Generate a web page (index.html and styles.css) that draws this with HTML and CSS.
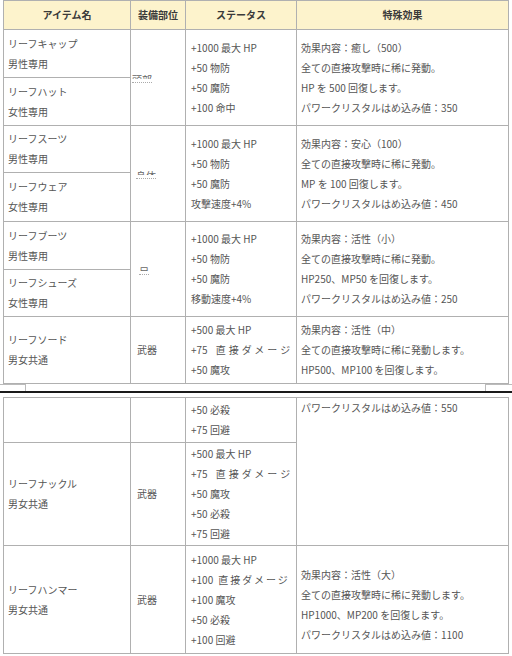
FILE: index.html
```html
<!DOCTYPE html>
<html lang="ja">
<head>
<meta charset="utf-8">
<title>リーフ装備</title>
<link rel="stylesheet" href="styles.css">
</head>
<body>
<table class="items">
  <colgroup><col class="c1"><col class="c2"><col class="c3"><col class="c4"></colgroup>
  <thead>
    <tr class="hd"><th>アイテム名</th><th>装備部位</th><th>ステータス</th><th>特殊効果</th></tr>
  </thead>
  <tbody>
    <tr class="r48">
      <td class="name">リーフキャップ<br>男性専用</td>
      <td class="part" rowspan="2"><span class="cutwrap ca"><span class="cut">頭部</span></span></td>
      <td class="stat" rowspan="2">+1000 最大 HP<br>+50 物防<br>+50 魔防<br>+100 命中</td>
      <td class="fx" rowspan="2">効果内容：癒し（500）<br>全ての直接攻撃時に稀に発動。<br>HP を 500 回復します。<br>パワークリスタルはめ込み値：350</td>
    </tr>
    <tr class="r48"><td class="name">リーフハット<br>女性専用</td></tr>
    <tr class="r47">
      <td class="name">リーフスーツ<br>男性専用</td>
      <td class="part" rowspan="2"><span class="cutwrap cb"><span class="cut">身体</span></span></td>
      <td class="stat" rowspan="2">+1000 最大 HP<br>+50 物防<br>+50 魔防<br>攻撃速度+4%</td>
      <td class="fx" rowspan="2">効果内容：安心（100）<br>全ての直接攻撃時に稀に発動。<br>MP を 100 回復します。<br>パワークリスタルはめ込み値：450</td>
    </tr>
    <tr class="r49"><td class="name">リーフウェア<br>女性専用</td></tr>
    <tr class="r48">
      <td class="name">リーフブーツ<br>男性専用</td>
      <td class="part" rowspan="2"><span class="cutwrap cc"><span class="cut">足</span></span></td>
      <td class="stat" rowspan="2">+1000 最大 HP<br>+50 物防<br>+50 魔防<br>移動速度+4%</td>
      <td class="fx" rowspan="2">効果内容：活性（小）<br>全ての直接攻撃時に稀に発動。<br>HP250、MP50 を回復します。<br>パワークリスタルはめ込み値：250</td>
    </tr>
    <tr class="r47"><td class="name">リーフシューズ<br>女性専用</td></tr>
    <tr class="r67">
      <td class="name">リーフソード<br>男女共通</td>
      <td class="part">武器</td>
      <td class="stat">+500 最大 HP<br>+75<span class="dmg d75">直接ダメージ</span><br>+50 魔攻</td>
      <td class="fx">効果内容：活性（中）<br>全ての直接攻撃時に稀に発動します。<br>HP500、MP100 を回復します。</td>
    </tr>
  </tbody>
</table>

<div class="seam"><span class="stub left"></span><span class="stub right"></span></div>
<div class="cutline"></div>

<table class="items">
  <colgroup><col class="c1"><col class="c2"><col class="c3"><col class="c4"></colgroup>
  <tbody>
    <tr class="r45">
      <td class="name"></td>
      <td class="part"></td>
      <td class="stat">+50 必殺<br>+75 回避</td>
      <td class="fx top" rowspan="2">パワークリスタルはめ込み値：550</td>
    </tr>
    <tr class="r103">
      <td class="name">リーフナックル<br>男女共通</td>
      <td class="part">武器</td>
      <td class="stat">+500 最大 HP<br>+75<span class="dmg d75">直接ダメージ</span><br>+50 魔攻<br>+50 必殺<br>+75 回避</td>
    </tr>
    <tr class="r108">
      <td class="name">リーフハンマー<br>男女共通</td>
      <td class="part">武器</td>
      <td class="stat">+1000 最大 HP<br>+100<span class="dmg d100">直接ダメージ</span><br>+100 魔攻<br>+50 必殺<br>+100 回避</td>
      <td class="fx low">効果内容：活性（大）<br>全ての直接攻撃時に稀に発動します。<br>HP1000、MP200 を回復します。<br>パワークリスタルはめ込み値：1100</td>
    </tr>
  </tbody>
</table>
</body>
</html>
```

FILE: styles.css
```css
* { box-sizing: border-box; }
html, body { margin: 0; padding: 0; background: #fff; }
body {
  font-family: "Noto Sans CJK JP", "Noto Sans", sans-serif;
  font-size: 10px;
  line-height: 20px;
  color: #555;
}

.items {
  border-collapse: collapse;
  table-layout: fixed;
  width: 505px;
  margin-left: 3px;
}
.items .c1 { width: 127px; }
.items .c2 { width: 55px; }
.items .c3 { width: 111px; }
.items .c4 { width: 212px; }

.items th,
.items td {
  border: 1px solid #b0b0b0;
  padding: 0;
  vertical-align: middle;
  text-align: left;
  white-space: nowrap;
  overflow: hidden;
}
.items th {
  background: #fdf3cc;
  color: #3a3a3a;
  font-weight: bold;
  text-align: center;
}

.hd { height: 29px; }
.r45 { height: 45px; }
.r47 { height: 47px; }
.r48 { height: 48px; }
.r49 { height: 49px; }
.r67 { height: 67px; }
.r103 { height: 103px; }
.r108 { height: 108px; }

.name { padding-left: 4px !important; }
.part { padding-left: 6px !important; }
.stat { padding-left: 5px !important; }
.fx { padding-left: 4px !important; }
.fx.top { vertical-align: top; }
.fx.low { padding-top: 11px !important; }

/* half-hidden part labels, as in the source capture */
.cutwrap {
  display: inline-block;
  vertical-align: middle;
  padding-bottom: 3px;
  border-bottom: 1px dotted #aaa;
  line-height: 0;
}
.cut {
  display: inline-block;
  height: 5px;
  line-height: 12px;
  overflow: hidden;
  font-size: 10px;
  color: #666;
}
.cutwrap.ca { margin-left: -5px; }
.cutwrap.cb { margin-left: -1px; }
.cutwrap.cc { margin-left: 2px; }

.dmg { display: inline-block; }
.dmg.d75 { margin-left: 8px; letter-spacing: 3px; }
.dmg.d100 { margin-left: 5px; letter-spacing: 2px; }

.seam {
  display: flex;
  justify-content: space-between;
  height: 7px;
}
.stub { display: block; }
.stub.left {
  width: 26px;
  border-top: 1px solid #bbb;
  border-right: 1px solid #bbb;
}
.stub.right {
  width: 27px;
  border-top: 1px solid #bbb;
  border-left: 1px solid #bbb;
}
.cutline {
  height: 2px;
  background: #1a1a1a;
  margin-bottom: 4px;
}
```
